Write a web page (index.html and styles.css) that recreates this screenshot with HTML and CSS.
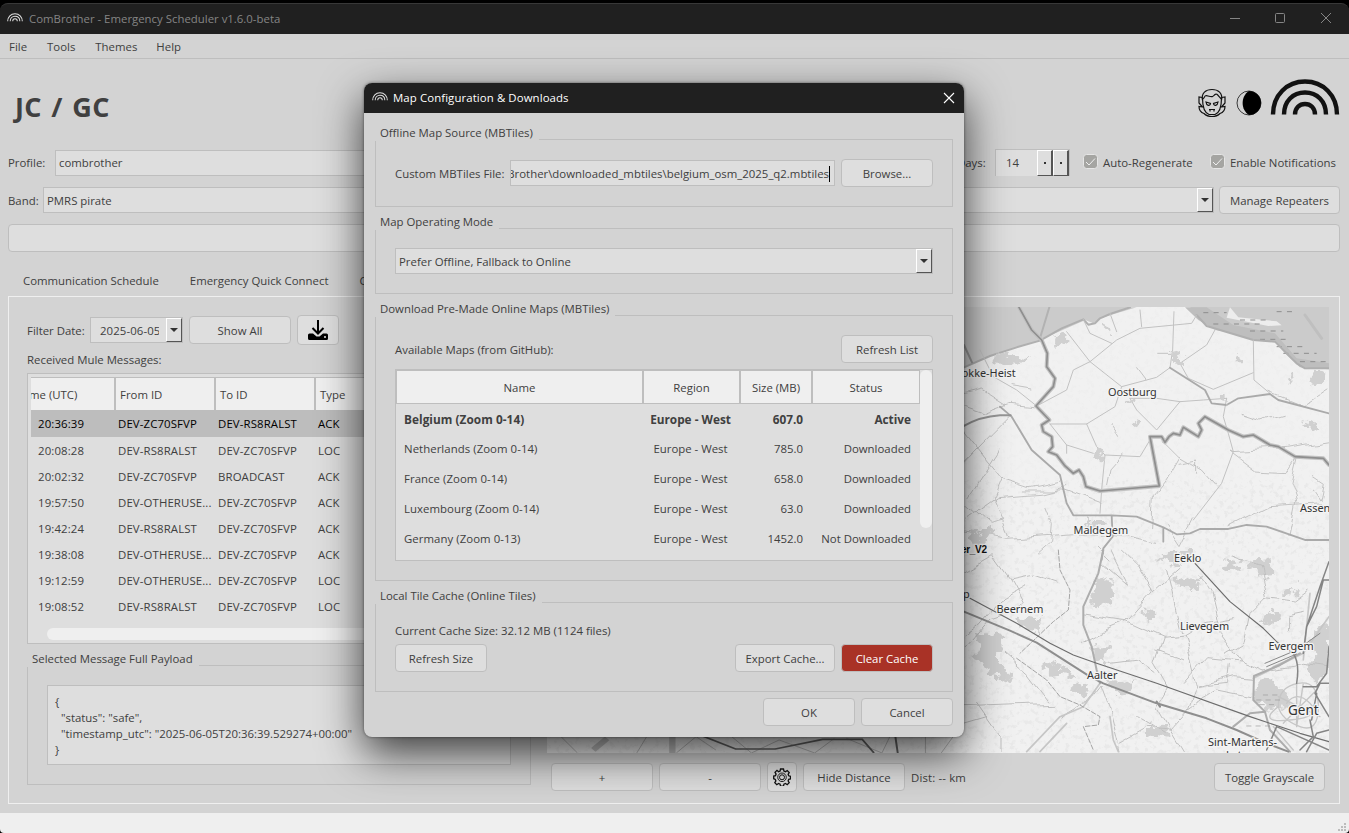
FILE: index.html
```html
<!DOCTYPE html>
<html lang="en">
<head>
<meta charset="utf-8">
<title>ComBrother - Emergency Scheduler</title>
<link rel="stylesheet" href="styles.css">
</head>
<body>
<svg width="0" height="0" class="defs">
  <symbol id="arcs" viewBox="0 0 70 36"><g fill="none" stroke="currentColor" stroke-width="4.4"><path d="M3 35.5C3 16 17 2.5 35 2.5S67 16 67 35.5"/><path d="M14 35.5C14 22 23 13.5 35 13.5S56 22 56 35.5"/><path d="M25 35.5C25 29 29.500 25 35 25S45 29 45 35.500"/></g></symbol>
</svg>
<div class="app">
  <header class="titlebar">
    <svg class="logo-s" viewBox="0 0 70 44"><use href="#arcs" width="70" height="42"/></svg>
    <span class="wtitle">ComBrother - Emergency Scheduler v1.6.0-beta</span>
    <svg class="winctl" viewBox="0 0 110 12" width="110" height="12"><g fill="none" stroke="#858585"><path d="M0 6.500H10"/><rect x="45.500" y="1.500" width="9" height="9" rx="1"/><path d="M91 1l10 10M101 1L91 11"/></g></svg>
  </header>
  <nav class="menu"><span>File</span><span>Tools</span><span>Themes</span><span>Help</span></nav>
  <section class="brand">
    <h1>JC / GC</h1>
    <div class="brand-icons">
      <svg width="28" height="30" viewBox="0 0 28 30"><g fill="none" stroke="#111" stroke-width="1.200"><path d="M4.500 12C3 5 8 1.500 14 1.500S25 5 23.500 12"/><path d="M4.500 10C4.500 21 7 25 11 26.500h6C21 25 23.500 21 23.500 10"/><path d="M4.500 9.500L1 9v6l3.500 4L1 18.500c0 4 2 6 5 7 2 2 5 3 8 3s6-1 8-3c3-1 5-3 5-7l-3.500.5 3.500-4V9l-3.500.5"/><path d="M4.500 11C8 10 5 6.500 10 8s5 .5 7-1.500 4 3 6.500 4.500"/><path d="M8 14l4.500 1.500c-.5 3-4 2.500-4.500-1.500zM20 14l-4.500 1.500c.5 3 4 2.500 4.500-1.500z"/><path d="M11 21.500h6M12 21.500v2M16 21.500v2"/></g></svg>
      <svg width="26" height="26" viewBox="0 0 26 26"><circle cx="13" cy="13" r="12" fill="none" stroke="#111" stroke-width=".8"/><path d="M13 1A12 12 0 0 1 13 25C4.500 20 4.500 6 13 1Z"/></svg>
      <svg class="logo-l" width="70" height="36"><use href="#arcs"/></svg>
    </div>
  </section>
  <div class="row r1">
    <label class="lprofile">Profile:</label><div class="field grow">combrother</div><label class="days">Days:</label>
    <div class="field spin"><span>14</span><i></i><i></i></div>
    <div class="check"><svg width="15" height="15" viewBox="0 0 15 15"><rect x=".5" y=".5" width="14" height="14" rx="3" fill="#a5a5a2" stroke="#e6e6e6"/><path d="M3 8l3 3 6-6.500" fill="none" stroke="#f0f0f0"/></svg>Auto-Regenerate</div>
    <div class="check c2"><svg width="15" height="15" viewBox="0 0 15 15"><rect x=".5" y=".5" width="14" height="14" rx="3" fill="#a5a5a2" stroke="#e6e6e6"/><path d="M3 8l3 3 6-6.500" fill="none" stroke="#f0f0f0"/></svg>Enable Notifications</div>
  </div>
  <div class="row r2">
    <label class="lband">Band:</label><div class="field combo grow"><span>PMRS pirate</span><b class="arrow"></b></div><button class="btn repeaters">Manage Repeaters</button>
  </div>
  <div class="barwrap"><div class="bar"></div></div>
  <div class="tabs"><span>Communication Schedule</span><span>Emergency Quick Connect</span><span>Contacts</span></div>
  <main class="panel">
    <section class="left">
      <div class="filter"><label>Filter Date:</label><div class="field combo date"><span>2025-06-05</span><b class="arrow"></b></div><button class="btn showall">Show All</button>
        <button class="btn dl"><svg width="22" height="22" viewBox="0 0 22 22"><path d="M11 1v13M5.500 9l5.500 5.500L16.500 9" fill="none" stroke="#000" stroke-width="2"/><path d="M2.500 14.500H6l3.500 3h3l3.500-3h3.500q1.500 0 1.500 1.500v3.500q0 1.500-1.500 1.500h-17Q1 21 1 19.500V16q0-1.500 1.500-1.500z"/><circle cx="18" cy="18" r="1" fill="#eee"/></svg></button></div>
      <div class="received">Received Mule Messages:</div>
      <div class="messages">
        <div class="mrow mhead"><span><em>me (UTC)</em></span><span>From ID</span><span>To ID</span><span>Type</span></div>
        <div class="mrow sel"><span>20:36:39</span><span>DEV-ZC70SFVP</span><span>DEV-RS8RALST</span><span>ACK</span></div>
        <div class="mrow"><span>20:08:28</span><span>DEV-RS8RALST</span><span>DEV-ZC70SFVP</span><span>LOC</span></div>
        <div class="mrow"><span>20:02:32</span><span>DEV-ZC70SFVP</span><span>BROADCAST</span><span>ACK</span></div>
        <div class="mrow"><span>19:57:50</span><span>DEV-OTHERUSE...</span><span>DEV-ZC70SFVP</span><span>ACK</span></div>
        <div class="mrow"><span>19:42:24</span><span>DEV-RS8RALST</span><span>DEV-ZC70SFVP</span><span>ACK</span></div>
        <div class="mrow"><span>19:38:08</span><span>DEV-OTHERUSE...</span><span>DEV-ZC70SFVP</span><span>ACK</span></div>
        <div class="mrow"><span>19:12:59</span><span>DEV-OTHERUSE...</span><span>DEV-ZC70SFVP</span><span>LOC</span></div>
        <div class="mrow"><span>19:08:52</span><span>DEV-RS8RALST</span><span>DEV-ZC70SFVP</span><span>LOC</span></div>
        <div class="hscroll"></div>
      </div>
      <div class="group payload"><div class="legend">Selected Message Full Payload</div>
        <pre>{
  "status": "safe",
  "timestamp_utc": "2025-06-05T20:36:39.529274+00:00"
}</pre></div>
    </section>
    <section class="right">
      <svg class="map" viewBox="547 307 782 446" width="782" height="446">
        <defs>
          <filter id="fields" x="0" y="0" width="100%" height="100%"><feTurbulence type="fractalNoise" baseFrequency=".2" numOctaves="4" seed="8"/><feColorMatrix values="0 0 0 0 .76  0 0 0 0 .76  0 0 0 0 .76  6 0 0 0 -3.200"/></filter>
          <filter id="rough" x="-5%" y="-5%" width="110%" height="110%"><feTurbulence type="fractalNoise" baseFrequency=".03" numOctaves="4" seed="3"/><feDisplacementMap in="SourceGraphic" scale="60" xChannelSelector="R" yChannelSelector="G"/></filter>
          <filter id="wind" x="-5%" y="-5%" width="110%" height="110%"><feTurbulence type="fractalNoise" baseFrequency=".012" numOctaves="2" seed="5"/><feDisplacementMap in="SourceGraphic" scale="36" xChannelSelector="R" yChannelSelector="G"/></filter>
          <clipPath id="land"><path d="M547 370L964 364 1040 340 1090 318 1130 307H1190L1215 330 1275 340 1300 365 1329 368V753H547Z"/></clipPath>
        </defs>
        <rect x="547" y="307" width="782" height="446" fill="#cbcbcb"/>
        <path d="M547 370L964 364 1040 340 1090 318 1130 307H1190L1215 330 1275 340 1300 365 1329 368V753H547Z" fill="#f1f1f1"/>
        <g clip-path="url(#land)"><rect x="547" y="480" width="782" height="273" filter="url(#fields)" opacity=".5"/><rect x="964" y="307" width="365" height="173" filter="url(#fields)" opacity=".16"/></g>
        <g transform="translate(950 290) scale(.3333)" fill="none" stroke-linejoin="round" stroke-linecap="round">
          <path fill="#cbcbcb" d="M42 52H560L450 85 430 100 400 88 335 115 270 152 200 172 120 198 42 232Z"/>
          <path fill="#bebebe" d="M705 52H770L850 105 975 130 1040 205 1137 220V238L1050 232 1010 195 975 155 910 150 780 110 745 90Z"/>
          <path fill="#ededed" d="M840 52l25 30 115 12 15 12-40 2-125-25z"/>
          <path stroke="#bfbfbf" stroke-width="9" d="M1065 75L1115 145"/>
          <path stroke="#8d8d8d" stroke-width="3" stroke-dasharray="15 16" stroke-linecap="butt" d="M760 68H830M870 90H960M790 102H940M900 123H1000M930 148H1020M980 170H1060M1000 190H1100M1050 215H1130M980 65H1040"/>
          <path stroke="#b0b0b0" stroke-width="6" d="M42 232L120 198 200 172 270 152 335 115 400 88 415 104 435 100 450 85 480 72 540 52M740 75L770 108 910 150 975 155 1040 220 1065 235 1137 235"/>
          <path stroke="#999" stroke-width="6" d="M42 165l24 52"/><path stroke="#b2b2b2" stroke-width="6" d="M298 52L270 145"/>
          <g stroke="#c2c2c2" stroke-width="3">
            <path d="M350 125L420 215 515 290 620 262 660 233 668 180 672 65M420 215L500 150 570 115 725 100 740 75M515 290L495 350 410 402 300 402M400 88L420 130 485 160M795 120L770 165 690 220M690 220L715 265 790 298 910 248M910 150L912 270 960 310M830 325L820 380 835 430 850 485 815 580 730 690M540 325L560 360 620 420 690 335 760 330 830 325M690 335L620 325 540 325M410 402L440 470 465 495 455 600 450 670M465 495L570 500 600 450M350 465L430 490M260 348L200 300 130 260 90 180M260 348L350 300 370 240 420 215M300 402L350 465 350 490M480 70L500 125M570 60L575 110"/>
          </g>
          <g filter="url(#wind)" stroke="#c0c0c0" stroke-width="2.800"><path d="M850 485L1010 475 1137 455M640 450L690 500 760 540 800 585M690 500L650 570 610 620 605 710M1040 500L1020 580 1040 640 1020 740M850 485L840 480 920 540 1010 545 1040 500M42 350L100 370 180 340 260 348M42 425L150 560 240 590 330 570M42 690L140 620 270 610 350 590M42 520L130 430 180 380M150 480L60 620M155 560L130 620 180 740M220 600H340L450 640M840 710L960 650 1137 640M1137 300L1060 350 960 310M42 315L100 300 170 345M42 720L170 745 400 730 520 740 620 760M650 710L690 770 730 690M290 650L310 700 305 760 265 795M520 495L480 540 470 590M180 290L240 300M620 190H670M440 770L480 810M590 270L560 230M1090 560l30 20-10 50-20-30M870 370L930 390 1000 370M480 400L510 440M690 520L740 510 740 550M50 640L120 700 160 690"/></g>
          <path stroke="#aaa" stroke-width="5.500" d="M150 350L185 380 245 480 330 555 350 640 370 676H485L560 680 640 712 680 733 720 730 750 717H835L890 705 950 710 1065 750H1137M485 676L488 740 460 775 455 810M640 712V755"/>
          <path stroke="#aaa" stroke-width="5.500" d="M660 233L765 300 785 340 830 345 865 325 960 312 985 330 1137 370"/>
          <path stroke="#969696" stroke-width="6" d="M42 408Q90 380 150 376L182 376"/>
          <path stroke="#c2c2c2" stroke-width="12" d="M207 52L245 120 275 150 292 190 290 230 315 265 310 290 258 348 298 390 275 405 280 425 305 440 308 470 295 485 320 495 345 528 370 550 387 540 400 560 408 590 450 603 628 588 600 440 635 440 645 457 657 440 670 430 690 435 700 412 745 440 755 420 745 400 765 380 835 420 880 440 910 435 960 465 985 470 1035 500 1120 505 1137 525"/>
          <path stroke="#8e8e8e" stroke-width="5" d="M207 52L245 120 275 150 292 190 290 230 315 265 310 290 258 348 298 390 275 405 280 425 305 440 308 470 295 485 320 495 345 528 370 550 387 540 400 560 408 590 450 603 628 588 600 440 635 440 645 457 657 440 670 430 690 435 700 412 745 440 755 420 745 400 765 380 835 420 880 440 910 435 960 465 985 470 1035 500 1120 505 1137 525"/>
          <g fill="#d0d0d0" filter="url(#rough)"><path d="M665 190l20-5 18 30-30 10zM310 135l25-10 15 25-30 15zM1060 385l20-5 30 30-35 8zM810 320l20-5v25l-20 4zM430 490l30-5v15l-30 4zM550 395l18-5 10 20-15 5zM1090 245l40 5-25 40-25-15zM410 690h60v25h-60zM660 780h60v20h-60zM460 110l15 5v10h-20zM860 200l20 5-5 12h-20zM530 330l20 4-4 14-18-4zM1010 260l15 5-6 14-12-4zM130 200l50-10 60 15-40 20-60-5zM60 730l60-5 10 25-60 8z"/></g>
        </g>
        <g transform="translate(950 550) scale(.3333)" fill="none" stroke-linejoin="round" stroke-linecap="round">
          <g fill="#d0d0d0" filter="url(#rough)"><path d="M80 240l80 15-10 80 40 60-50-15-60-40zM430 100l50-20 15 40-40 60-35-20zM280 340l60 10 30 25-70 5zM680 70l60 15-5 35-55-10zM1000 120l35-10-5 35-30 5zM580 175l30 5-5 35-20-15zM900 30l50-5 35 45-70 10zM430 290l50-10-20 60-30-15zM470 390l80 5-10 30-60 10zM610 10l60 5 30 30-70-15zM1090 250l47-40v140l-35 60-20-40zM920 390l80 10 20 60-70 20-35-40zM200 200l80 10-10 30-60-5zM820 30l60 10-10 20-50-5zM940 190l40-10 10 30-40 15zM380 400l40 10-10 40-35-15zM600 520l60 10-10 30-50-10z"/></g>
          <g stroke="#c0c0c0" stroke-width="3" filter="url(#wind)">
            <path d="M42 70L130 20 180 90 250 75 320 100M180 90L220 165M400 195L530 215 610 125 690 55M610 125L560 40 520 0M530 215L640 265 700 258M640 265L615 340 655 410 620 470 660 540 700 605M700 258L720 330 740 410 715 480 660 540M650 60L695 250M750 80L780 130 810 250 870 330 940 360M870 330L770 320 700 400M1137 350L1060 340 940 360M400 280L470 240 530 215M42 260L90 220 150 150 220 110M160 310L230 370 290 450M42 470L310 460M80 460L150 560 150 605M330 510L390 475 450 400M450 400L480 480 500 560 510 600M660 540L590 535 510 580M850 20L930 50 950 140 900 190 880 280 830 310M950 140L1040 150 1080 120M1010 240V200L1060 190M715 480L800 420 900 440M740 410L850 380 910 385M42 300L130 200 220 170M560 500L640 550M480 0L530 100 460 40M700 258L770 215 850 200M740 410L830 400 835 340M480 340L560 330 615 370M620 300L700 330M42 520L110 500"/>
          </g>
          <g stroke="#c6c6c6" stroke-width="5"><path d="M230 605L330 500 400 470 450 400M270 605L350 520M1137 200L1060 310 970 350M1080 130L1060 330M480 500L490 570 505 605M910 385L1000 340 1060 310"/><path stroke-width="4" d="M985 470Q985 410 1045 400T1105 470 1050 530 985 470M1010 460Q1040 420 1080 460T1020 510 985 470M1040 400V530M1060 400L1040 530M985 440L1110 500M1000 520L1100 420M970 530L1030 600"/></g>
          <path stroke="#adadad" stroke-width="6" d="M460 0L445 70 400 170V225L425 290 440 360 450 400M1050 310L990 345 912 378 910 450 945 485 960 540 1020 605M945 485L900 490 850 530"/>
          <path stroke="#a4a4a4" stroke-width="3" stroke-dasharray="14 6" d="M325 0L330 60 360 120 355 180 310 215 210 310M200 325L290 390 330 440 390 465 450 500 445 525 400 530 430 600"/>
          <path stroke="#6c6c6c" stroke-width="3.500" d="M60 145L200 220 300 280 370 315 440 340 620 400 900 500 1050 550 1137 575M735 40L840 155 940 235 980 275 1030 310"/>
          <path stroke="#8e8e8e" stroke-width="6" d="M42 185L180 242 260 278 420 380 460 400 620 460 770 505 860 540 950 580 1015 605M620 455l10 15"/>
          <path stroke="#858585" stroke-width="4.500" d="M1137 35L1110 110 1070 230 1060 310M1137 90H1120L1100 170 1070 230M1137 400H1110L1095 430 1137 500M1060 410H1100L1130 370 1137 290M1040 400Q1050 340 1030 310M950 600L980 530 1137 600M1070 605L1100 550 1137 540M1080 510L1090 560 1050 600M1100 430L1085 510"/>
          <path stroke="#888" stroke-width="3" d="M945 340L1040 300 1110 250M950 350L1040 312"/>
          <path stroke="#999" stroke-width="2" stroke-dasharray="13 15" d="M940 435H990M920 450H1000M930 464H980M890 528H970"/>
        </g>
        <g transform="translate(360 580) scale(.3954 .3333)" fill="none" stroke="#b8b8b8" stroke-width="2.500"><path stroke="#c4c4c4" stroke-width="16" d="M590 510L625 475M790 460V520"/><path d="M500 460L550 519M725 470L700 519M800 519L850 470 900 510M940 470L990 519 1060 480 1150 519 1200 475M1340 470L1320 519 1230 475M1430 470V519M1470 519L1500 470"/><path stroke="#666" stroke-width="5" d="M860 465L950 507H1050L1170 478H1270L1300 519M1354 470L1360 519"/></g>
        <g class="places"><text x="955" y="377">nokke-Heist</text><text x="1108" y="396">Oostburg</text><text x="1300" y="512">Assenede</text><text x="1073.500" y="533.500">Maldegem</text><text x="1174" y="562">Eeklo</text><text x="996.500" y="613">Beernem</text><text x="1180" y="629.500">Lievegem</text><text x="1268.500" y="650">Evergem</text><text x="1087" y="678.500">Aalter</text><text x="1288" y="715" class="big">Gent</text><text x="1208" y="745.500">Sint-Martens-</text><text x="1226" y="758.500">Latem</text><text x="963" y="598">p</text><text x="961" y="553" class="node">er_V2</text></g>
      </svg>
      <div class="maptools"><button class="btn w102">+</button><button class="btn w102">-</button><button class="btn gear"><svg width="18" height="18" viewBox="0 0 18 18"><g fill="none" stroke="#111" stroke-width="1.300"><path d="M7.500 1h3l.4 2 1.600.7 1.700-1.200 2 2.100-1.100 1.700.6 1.500 1.800.5v2.600l-1.800.5-.6 1.500 1.100 1.700-2 2.100-1.700-1.200-1.600.7-.4 2h-3l-.4-2-1.600-.7-1.700 1.200-2-2.100 1.100-1.700-.6-1.500L.7 10.700V8.100l1.800-.5.6-1.500L2 4.400l2-2.100 1.500 1.400L7.100 3z"/><circle cx="9" cy="9.300" r="4.300" stroke-width=".9"/><circle cx="9" cy="9.300" r="2.500" stroke-width="1"/></g></svg></button><button class="btn w102">Hide Distance</button><span class="dist">Dist: -- km</span><button class="btn toggle">Toggle Grayscale</button></div>
    </section>
  </main>
  <footer class="status"><svg width="9" height="9" viewBox="0 0 9 9" fill="#bcbcbc"><path d="M6 0h2v2H6zM3 3h2v2H3zM6 3h2v2H6zM0 6h2v2H0zM3 6h2v2H3zM6 6h2v2H6z"/></svg></footer>
</div>

<div class="dialog">
  <header class="dtitle"><svg class="logo-s" viewBox="0 0 70 44"><use href="#arcs" width="70" height="42"/></svg><span>Map Configuration &amp; Downloads</span><svg class="dx" width="12" height="12" viewBox="0 0 12 12"><path d="M1 1l10 10M11 1L1 11" stroke="#fff" stroke-width="1.100"/></svg></header>
  <div class="dbody">
    <section class="group g1"><div class="legend">Offline Map Source (MBTiles)</div>
      <div class="line"><label>Custom MBTiles File:</label><div class="field path"><span>Brother\downloaded_mbtiles\belgium_osm_2025_q2.mbtiles</span></div><button class="btn w92">Browse...</button></div></section>
    <section class="group g2"><div class="legend">Map Operating Mode</div>
      <div class="field combo"><span>Prefer Offline, Fallback to Online</span><b class="arrow"></b></div></section>
    <section class="group g3"><div class="legend">Download Pre-Made Online Maps (MBTiles)</div>
      <div class="line between"><label>Available Maps (from GitHub):</label><button class="btn w92">Refresh List</button></div>
      <div class="maps"><div class="mtable">
        <div class="trow thead"><span>Name</span><span>Region</span><span>Size (MB)</span><span>Status</span></div>
        <div class="trow active"><span>Belgium (Zoom 0-14)</span><span>Europe - West</span><span>607.0</span><span>Active</span></div>
        <div class="trow"><span>Netherlands (Zoom 0-14)</span><span>Europe - West</span><span>785.0</span><span>Downloaded</span></div>
        <div class="trow"><span>France (Zoom 0-14)</span><span>Europe - West</span><span>658.0</span><span>Downloaded</span></div>
        <div class="trow"><span>Luxembourg (Zoom 0-14)</span><span>Europe - West</span><span>63.0</span><span>Downloaded</span></div>
        <div class="trow"><span>Germany (Zoom 0-13)</span><span>Europe - West</span><span>1452.0</span><span>Not Downloaded</span></div>
      </div><div class="vscroll"></div></div></section>
    <section class="group g4"><div class="legend">Local Tile Cache (Online Tiles)</div>
      <div class="cache">Current Cache Size: 32.12 MB (1124 files)</div>
      <div class="line"><button class="btn w92">Refresh Size</button><button class="btn export">Export Cache...</button><button class="btn w92 danger">Clear Cache</button></div></section>
    <div class="line actions"><button class="btn w92">OK</button><button class="btn w92">Cancel</button></div>
  </div>
</div>
</body>
</html>
```
FILE: styles.css
```css
* { box-sizing: border-box; }
body { margin: 0; width: 1349px; height: 833px; overflow: hidden; background: #000; color: #404040; font: 11.4px/16px "Open Sans", "Noto Sans", sans-serif; white-space: nowrap; }
.defs { position: absolute; }
.app { height: 833px; display: flex; flex-direction: column; padding-top: 3px; }
.titlebar { height: 31px; flex: none; background: #202020; border-top: 1px solid #383838; border-radius: 8px 8px 0 0; display: flex; align-items: center; padding: 0 17px 0 7px; color: #858585; }
.logo-s { width: 16px; height: 11px; color: #e0e0e0; margin: -3px 6px 0 0; }
.wtitle { flex: 1; }
.winctl { display: block; margin-right: -8px; margin-top: -2px; }
.menu { height: 25px; flex: none; background: #d3d3d3; border-bottom: 1px solid #bebebe; display: flex; gap: 20px; padding: 5px 9px; }
.menu span:last-child { margin-left: -1px; }
.brand { height: 90px; flex: none; background: #d3d3d3; display: flex; justify-content: space-between; padding: 0 9px 0 15px; }
h1 { margin: 28px 0 0; font-size: 27px; letter-spacing: .4px; word-spacing: 2px; line-height: 40px; font-weight: 700; }
.brand-icons { display: flex; align-items: flex-start; color: #111; }
.brand-icons svg { margin: 29px 0 0 11px; }
.brand-icons svg:nth-child(2) { margin: 31px 0 0 10px; }
.brand-icons .logo-l { margin: 20px 0 0 8px; }
.row { display: flex; flex: none; align-items: center; background: #d3d3d3; padding: 0 9px 0 8px; }
.r1 { height: 27px; }
.r2 { height: 38px; padding-top: 10px; }
.r2 .lband { padding-top: 1px; }
.lprofile { width: 47px; }
.lband { width: 35px; }
.grow { flex: 1; }
.days { width: 37px; margin-left: 20px; }
.field { height: 26px; background: #dedede; border: 1px solid #bebebe; padding: 4px 3px; overflow: hidden; }
.spin { width: 75px; height: 28px; margin-right: 13px; display: flex; padding: 0; margin-left: 1px; }
.spin span { width: 42px; padding: 5px 0 0 10px; }
.spin i, .arrow { width: 16px; flex: none; background: #dedede; border: 1px solid #fff; border-right: 2px solid #555; border-bottom: 1px solid #555; display: flex; align-items: center; justify-content: center; }
.spin i::before { content: ""; width: 2px; height: 2px; background: #333; }
.check { display: flex; align-items: center; gap: 5px; width: 127px; }
.check svg { margin-top: -2px; }
.check.c2 { width: 130px; }
.combo { display: flex; padding: 0; }
.combo span { flex: 1; padding: 5px 3px; overflow: hidden; }
.arrow { border-right-width: 1px; }
.arrow::before { content: ""; border: 4px solid transparent; border-top-color: #333; border-bottom: 0; }
.btn { height: 28px; flex: none; border: 1px solid #bebebe; border-radius: 4px; background: #dedede; color: inherit; font: inherit; padding: 1px 0 0; display: flex; align-items: center; justify-content: center; }
.repeaters { width: 121px; margin-left: 5px; }
.barwrap { flex: none; background: #d3d3d3; padding: 10px 9px 0 8px; }
.bar { height: 28px; background: #dedede; border: 1px solid #bebebe; border-radius: 4px; }
.tabs { height: 44px; flex: none; background: #d3d3d3; display: flex; padding: 21px 0 0 23px; gap: 31px; }
.panel { height: 517px; flex: none; background: #d3d3d3; display: flex; padding: 0 9px 9px 8px; }
.panel .left, .panel .right { border: 1px solid #efefef; }
.left { width: 538px; border-right: 0 !important; padding: 18px 0 0 18px; }
.right { flex: 1; border-left: 0 !important; padding: 10px 0 0 1px; }
.filter { display: flex; align-items: center; height: 30px; }
.filter label { width: 63px; padding-top: 1px; }
.date { width: 93px; }
.date span { padding-left: 9px; margin-right: 7px; padding-right: 0; letter-spacing: .1px; }
.showall { width: 102px; margin-left: 6px; }
.dl { width: 42px; height: 30px; margin-left: 6px; padding: 0; }
.received { height: 28px; padding-top: 7px; }
.messages { width: 504px; height: 271px; border: 1px solid #bebebe; background: #dedede; padding: 3px; }
.mrow { height: 26px; display: grid; grid-template-columns: 84px 100px 100px 1fr; align-items: center; padding-top: 1px; }
.mrow span { padding-left: 3px; letter-spacing: .12px; }
.mrow span:first-child { padding-left: 7px; }
.mhead { height: 33px; background: #efefef; border-top: 1px solid #bebebe; padding: 0; grid-template-columns: 85px 100px 100px 1fr; }
.mhead span { height: 32px; line-height: 33px; border-right: 2px solid #bebebe; padding-left: 4px; overflow: hidden; letter-spacing: 0; }
.mhead span:first-child { padding: 0; }
.mhead em { font-style: normal; margin-left: -2px; }
.sel { height: 27px; background: #bdbdbd; color: #000; }
.hscroll { height: 12px; margin: 9px 20px 0 16px; background: #efefef; border-radius: 6px; }
.group { border: 1px solid #bebebe; padding: 0 19px; }
.legend { width: fit-content; margin: -15px 0 0 -20px; padding: 0 6px 0 5px; background: #d3d3d3; height: 16px; }
.payload { width: 504px; height: 120px; margin-top: 21px; }
.payload .legend { margin-top: -15px; }
pre { margin: 18px 0 0; width: 464px; height: 80px; border: 1px solid #bebebe; background: #dedede; padding: 8px 7px; font: inherit; }
.map { display: block; }
.places { font: 10.9px "Noto Sans", sans-serif; fill: #333; stroke: #f4f4f4; stroke-width: 2.5px; paint-order: stroke; }
.places .big { font-size: 13.5px; }
.places .node { font: bold 10px "Liberation Sans", sans-serif; fill: #111; letter-spacing: -.3px; }
.maptools { display: flex; align-items: center; gap: 6px; padding: 9px 14px 0 4px; height: 39px; }
.w102 { width: 102px; }
.gear { width: 30px; height: 30px; padding: 0; }
.dist { flex: 1; padding-top: 1px; letter-spacing: .15px; }
.toggle { width: 111px; }
.status { flex: 1; background: #efefef; border-radius: 0 0 4px 4px; display: flex; justify-content: flex-end; align-items: flex-end; padding: 0 2px 1px; }
.dialog { position: absolute; left: 364px; top: 83px; width: 600px; height: 654px; border-radius: 8px; background: #d3d3d3; box-shadow: 0 16px 44px rgba(0,0,0,.74), 0 0 3px rgba(0,0,0,.5); }
.dtitle { height: 30px; border-radius: 8px 8px 0 0; background: #202020; color: #fff; display: flex; align-items: center; padding: 0 9px 0 8px; }
.dtitle .logo-s { margin-right: 5px; }
.dtitle span { flex: 1; letter-spacing: .1px; }
.dx { margin-top: -1px; }
.dbody { padding: 26px 11px 0; }
.g1 { height: 68px; margin-bottom: 21px; }
.g2 { height: 66px; margin-bottom: 21px; }
.g3 { height: 266px; margin-bottom: 21px; }
.g4 { height: 90px; margin-bottom: 6px; }
.line { display: flex; align-items: center; gap: 6px; }
.line label { padding-top: 1px; }
.g1 .line { margin-top: 18px; }
.g1 label { width: 109px; }
.path { width: 325px; display: flex; justify-content: flex-end; padding: 5px 4px 3px 3px; }
.path span { border-right: 1px solid #000; }
.g2 .combo { margin-top: 18px; }
.between { justify-content: space-between; margin-top: 18px; }
.maps { height: 192px; margin-top: 6px; background: #dedede; border: 1px solid #bebebe; display: flex; }
.mtable { width: 524px; }
.trow { height: 30px; display: grid; grid-template-columns: 247px 97px 72px 108px; align-items: center; }
.trow span { padding: 0 9px 0 8px; text-align: right; }
.trow span:first-child { text-align: left; letter-spacing: .05px; }
.trow span:nth-child(2) { text-align: center; padding: 0 2px 0 0; }
.thead { height: 34px; background: #efefef; border: 1px solid #bebebe; border-width: 1px 0 1px 1px; }
.thead span, .thead span:first-child, .thead span:nth-child(2) { text-align: center; height: 32px; line-height: 33px; border-right: 2px solid #bebebe; padding: 0; }
.thead span:last-child { border-right: 1px solid #bebebe; margin-right: 1px; }
.active { font-weight: 700; font-size: 11.8px; }
.vscroll { width: 12px; height: 158px; background: #efefef; border-radius: 6px; }
.cache { margin-top: 18px; height: 22px; padding-top: 1px; }
.export { width: 100px; margin-left: auto; }
.w92 { width: 92px; }
.danger { background: #a93226; color: #fff; }
.actions { justify-content: flex-end; }
```
